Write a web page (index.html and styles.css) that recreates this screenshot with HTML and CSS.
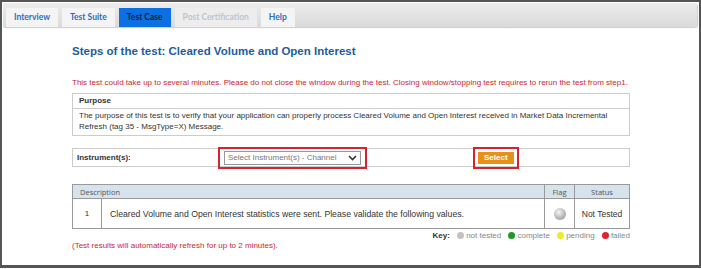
FILE: index.html
```html
<!DOCTYPE html>
<html lang="en">
  <head>
    <meta charset="UTF-8" />
    <title>Test Case</title>
    <link rel="stylesheet" href="styles.css">
  </head>
  <body>
    <div class="frame">
      <div class="tabbar">
        <div class="tab">Interview</div>
        <div class="tab">Test Suite</div>
        <div class="tab active">Test Case</div>
        <div class="tab disabled">Post Certification</div>
        <div class="tab">Help</div>
      </div>

      <div class="content">
        <h1 class="title">Steps of the test: Cleared Volume and Open Interest</h1>
        <p class="warn">This test could take up to several minutes. Please do not close the window during the test. Closing window/stopping test requires to rerun the test from step1.</p>

        <div class="purpose">
          <div class="purpose-head">Purpose</div>
          <div class="purpose-body">The purpose of this test is to verify that your application can properly process Cleared Volume and Open Interest received in Market Data Incremental Refresh (tag 35 - MsgType=X) Message.</div>
        </div>

        <div class="instrument">
          <div class="label">Instrument(s):</div>
          <div class="mark select-mark">
            <div class="select">
              <span>Select Instrument(s) - Channel</span>
              <svg width="9" height="6" viewBox="0 0 9 6"><path d="M1 1 L4.5 4.5 L8 1" fill="none" stroke="#333" stroke-width="1.6"/></svg>
            </div>
          </div>
          <div class="mark btn-mark">
            <div class="btn">Select</div>
          </div>
        </div>

        <table class="results">
          <tr class="head">
            <th colspan="2" class="desc">Description</th>
            <th class="flag">Flag</th>
            <th class="status">Status</th>
          </tr>
          <tr>
            <td class="num">1</td>
            <td class="text">Cleared Volume and Open Interest statistics were sent. Please validate the following values.</td>
            <td class="flag"><span class="ball"></span></td>
            <td class="status">Not Tested</td>
          </tr>
        </table>

        <div class="key">
          <b>Key:</b>
          <span class="dot grey"></span>not tested
          <span class="dot green"></span>complete
          <span class="dot yellow"></span>pending
          <span class="dot red"></span>failed
        </div>

        <p class="refresh">(Test results will automatically refresh for up to 2 minutes).</p>
      </div>
    </div>
  </body>
</html>
```

FILE: styles.css
```css
*{
    margin: 0;
    padding: 0;
    box-sizing: border-box;
}
body{
    background: #fff;
    font-family: "Liberation Sans", Arial, sans-serif;
    font-size: 8px;
    color: #333;
}
.frame{
    width: 701px;
    height: 268px;
    border: 2px solid #555;
    border-bottom-width: 3px;
}
.tabbar{
    margin: 1px 2px 0 1px;
    height: 24px;
    background: linear-gradient(#ececec, #dadada);
    border-radius: 0 3px 3px 0;
    box-shadow: 1px 1px 1px #ccc;
    display: flex;
    align-items: flex-end;
    gap: 4px;
    padding-left: 3px;
}
.tab{
    height: 19px;
    line-height: 19px;
    padding: 0 8px;
    background: #f4f4f4;
    color: #2a6cc4;
    font-family: Lato, sans-serif;
    font-weight: bold;
    font-size: 8.5px;
}
.tab.active{
    background: #0c6fe2;
    color: #0b1f3a;
}
.tab.disabled{
    color: #b9c5d2;
    background: #ededed;
}
.content{
    padding-left: 70px;
    width: 628px;
}
.title{
    margin-top: 17px;
    font-size: 11.5px;
    line-height: 14px;
    color: #1d5c9e;
}
.warn{
    margin-top: 20px;
    color: #cc1f2f;
    font-size: 8px;
    line-height: 10px;
}
.purpose{
    margin-top: 5px;
    border: 1px solid #ccc;
}
.purpose-head{
    font-weight: bold;
    padding: 2px 6px;
    line-height: 10px;
    border-bottom: 1px solid #ccc;
}
.purpose-body{
    padding: 2px 6px 3px;
    line-height: 10.5px;
}
.instrument{
    margin-top: 12px;
    border: 1px solid #ccc;
    height: 19px;
    display: flex;
    align-items: center;
}
.label{
    font-weight: bold;
    padding-left: 4px;
    width: 145px;
}
.mark{
    border: 2px solid #d8232f;
    padding: 2px 4px;
}
.select{
    width: 137px;
    height: 14px;
    border: 1px solid #999;
    display: flex;
    align-items: center;
    justify-content: space-between;
    padding: 0 3px;
    color: #777;
}
.btn-mark{
    margin-left: 106px;
    padding: 3px 3px;
}
.btn{
    background: #e8911a;
    color: #fff;
    font-weight: bold;
    height: 12px;
    line-height: 12px;
    padding: 0 6px;
}
.results{
    margin-top: 17px;
    width: 100%;
    border-collapse: collapse;
    border: 1px solid #999;
}
.results th{
    background: #d5e3ed;
    font-weight: normal;
    font-family: "Open Sans", sans-serif;
    color: #555;
    height: 14px;
    border: 1px solid #999;
    font-size: 7.5px;
}
.results th.desc{
    text-align: left;
    padding-left: 7px;
}
.results td{
    border: 1px solid #999;
    height: 30px;
}
.results td.num{
    width: 29px;
    text-align: center;
}
.results td.text{
    padding-left: 8px;
    font-size: 8.7px;
}
.flag{
    width: 30px;
    text-align: center;
}
.status{
    width: 55px;
    text-align: center;
}
.results td.status{
    font-size: 8.5px;
}
.ball{
    display: inline-block;
    width: 12px;
    height: 12px;
    border-radius: 50%;
    background: radial-gradient(circle at 40% 35%, #f4f4f4, #a8a8a8 70%, #888);
    vertical-align: middle;
}
.key{
    margin-top: 2px;
    text-align: right;
    color: #888;
    font-size: 8px;
    line-height: 10px;
}
.key b{
    color: #333;
}
.dot{
    display: inline-block;
    width: 7px;
    height: 7px;
    border-radius: 50%;
    margin: 0 2px 0 5px;
    vertical-align: -1px;
}
.dot.grey{ background: #c2c2c2; }
.dot.green{ background: #1c9a23; }
.dot.yellow{ background: #eeea2c; }
.dot.red{ background: #e0242c; }
.refresh{
    margin-top: 0;
    color: #cc1f2f;
    font-size: 8px;
    line-height: 10px;
}
```
